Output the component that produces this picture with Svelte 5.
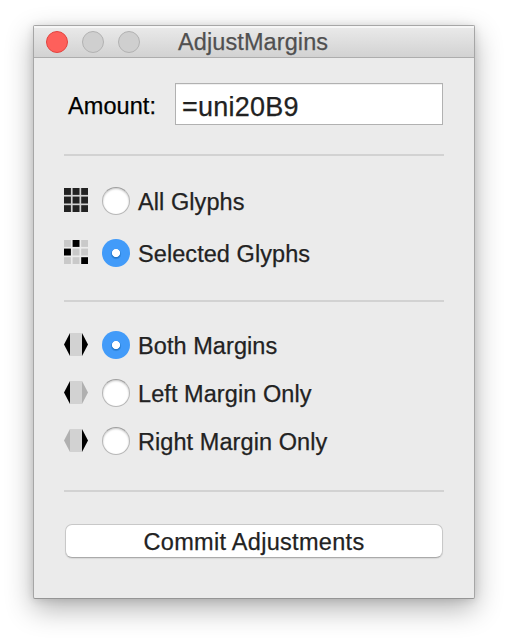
<script>
  let scope = $state('selected');
  let side = $state('both');
  let amount = $state('=uni20B9');

  const scopes = [
    { id: 'all', label: 'All Glyphs', on: [0, 1, 2, 3, 4, 5, 6, 7, 8], color: '#222222' },
    { id: 'selected', label: 'Selected Glyphs', on: [1, 3, 8], color: '#000000' }
  ];
  const sides = [
    { id: 'both', label: 'Both Margins', left: true, right: true },
    { id: 'left', label: 'Left Margin Only', left: true, right: false },
    { id: 'right', label: 'Right Margin Only', left: false, right: true }
  ];
  const cells = [0, 1, 2, 3, 4, 5, 6, 7, 8];
</script>

<main>
  <section class="window">
    <header>
      <div class="lights">
        <span class="light close"></span>
        <span class="light"></span>
        <span class="light"></span>
      </div>
      <h1>AdjustMargins</h1>
    </header>

    <div class="content">
      <div class="amount">
        <label for="amount">Amount:</label>
        <input id="amount" bind:value={amount} spellcheck="false" />
      </div>

      <hr />

      <div class="scopes">
        {#each scopes as s}
          <label class="option">
            <svg width="24" height="24" viewBox="0 0 24 24">
              {#if s.id === 'all'}<rect width="24" height="24" fill="#d2d2d2" />{/if}
              {#each cells as c}
                <rect
                  x={(c % 3) * 8.6}
                  y={Math.floor(c / 3) * 8.6}
                  width="6.9"
                  height="6.9"
                  fill={s.on.includes(c) ? s.color : '#c9c9c9'}
                />
              {/each}
            </svg>
            <input type="radio" name="scope" value={s.id} bind:group={scope} />
            <span class="text">{s.label}</span>
          </label>
        {/each}
      </div>

      <hr />

      <div class="sides">
        {#each sides as s}
          <label class="option">
            <svg width="24" height="24" viewBox="0 0 24 24">
              <rect x="6" y="1" width="12" height="23" fill="#d2d2d2" />
              <path d="M6 1V24L0 12.5Z" fill={s.left ? '#000' : '#b0b0b0'} />
              <path d="M18 1V24L24 12.5Z" fill={s.right ? '#000' : '#b0b0b0'} />
            </svg>
            <input type="radio" name="side" value={s.id} bind:group={side} />
            <span class="text">{s.label}</span>
          </label>
        {/each}
      </div>

      <hr />

      <button type="button">Commit Adjustments</button>
    </div>
  </section>
</main>

<style>
  :global(body) {
    background: #fff;
  }
  main {
    box-sizing: border-box;
    height: 640px;
    padding: 25px 33px 0;
    overflow: hidden;
    font: 23.5px/32px 'Liberation Sans', Arial, sans-serif;
    letter-spacing: 0.07px;
    -webkit-text-stroke: 0.25px currentColor;
    color: #222;
  }
  .window {
    box-sizing: border-box;
    width: 442px;
    height: 574px;
    border: 1px solid #a6a6a6;
    border-bottom-color: #959595;
    border-radius: 2px;
    background: #ebebeb;
    box-shadow: 0 10px 28px rgba(0, 0, 0, 0.3), 0 1px 8px rgba(0, 0, 0, 0.12);
  }
  header {
    box-sizing: border-box;
    height: 32px;
    display: grid;
    grid-template-columns: 144px 1fr;
    align-items: center;
    border-top: 2px solid #f6f6f6;
    border-bottom: 1px solid #adadad;
    background: linear-gradient(#e9e9e9, #d2d2d2);
  }
  .lights {
    display: flex;
    gap: 14px;
    padding-left: 12px;
    margin-top: -1px;
  }
  .light {
    box-sizing: border-box;
    width: 22px;
    height: 22px;
    border: 1px solid #b2b2b2;
    border-radius: 50%;
    background: #cfcfcf;
  }
  .close {
    border-color: #e2443f;
    background: #fe605b;
  }
  h1 {
    margin: -2px 0 0;
    font-size: 23.5px;
    font-weight: 400;
    line-height: 28px;
    letter-spacing: 0.1px;
    color: #505050;
  }
  .content {
    display: flex;
    flex-direction: column;
    padding: 25px 30px 0;
  }
  .amount {
    height: 42px;
    display: flex;
    align-items: center;
    padding: 0 1px 0 4px;
  }
  .amount label {
    width: 107px;
    padding-top: 4px;
    color: #000;
  }
  #amount {
    box-sizing: border-box;
    width: 268px;
    height: 42px;
    margin: 0;
    padding: 7px 6px 0;
    border: 1px solid #b1b1b1;
    border-radius: 0;
    outline: none;
    background: #fff;
    box-shadow: inset 0 1px 0 #f0f0f0;
    font: 27px/33px 'Liberation Sans', Arial, sans-serif;
    letter-spacing: 0.25px;
    color: #222;
  }
  hr {
    width: 100%;
    height: 2px;
    margin: 0;
    border: 0;
    background: #d2d2d2;
  }
  .amount + hr {
    margin-top: 29px;
  }
  .scopes,
  .sides {
    display: flex;
    flex-direction: column;
  }
  .scopes {
    gap: 24px;
    padding: 31px 0 33px;
  }
  .sides {
    gap: 20px;
    padding: 29px 0 35px;
  }
  .option {
    height: 28px;
    display: flex;
    align-items: center;
  }
  .option svg {
    display: block;
    margin-top: -2px;
  }
  .option input {
    appearance: none;
    box-sizing: border-box;
    width: 28px;
    height: 28px;
    margin: 0 8px 0 14px;
    border: 1px solid #b7b7b7;
    border-top-color: #9f9f9f;
    border-radius: 50%;
    background: #fff;
    box-shadow: inset 0 1px 2px rgba(0, 0, 0, 0.22);
  }
  .option input:checked {
    border: 0;
    background: radial-gradient(circle at center, #fff 3.7px, rgba(255, 255, 255, 0) 4.4px),
      radial-gradient(circle at 14px 15px, #2478ca 3.8px, #429bf9 5.6px);
    box-shadow: none;
  }
  .text {
    padding-top: 1px;
    white-space: nowrap;
  }
  button {
    box-sizing: border-box;
    height: 34px;
    margin: 32px 1px 0;
    padding: 1px 0 0;
    border: 1px solid #c8c8c8;
    border-bottom-color: #aaa;
    border-radius: 7px;
    background: #fff;
    box-shadow: 0 1px 1px rgba(0, 0, 0, 0.08);
    font: inherit;
    line-height: 28px;
    letter-spacing: 0.3px;
    color: #222;
  }
</style>
